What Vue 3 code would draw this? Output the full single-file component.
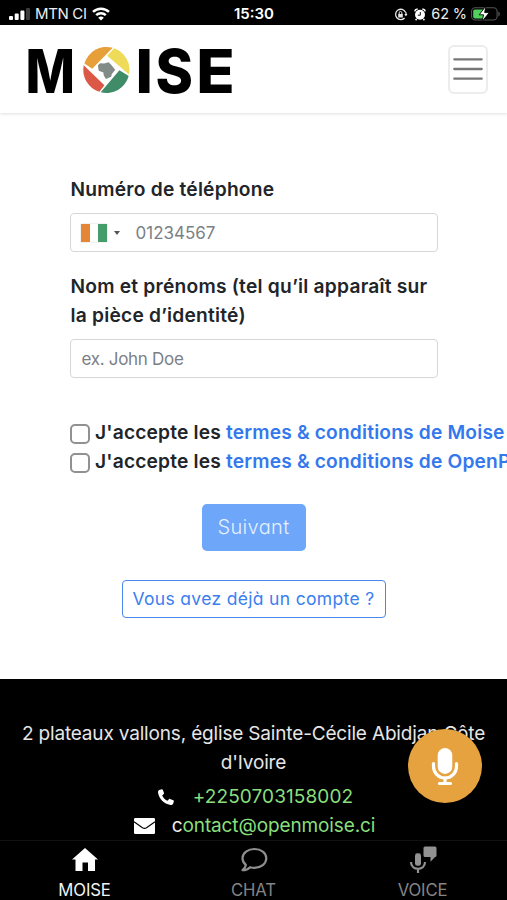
<script setup>
import { ref } from 'vue'

const phone = ref('')
const fullName = ref('')
const terms = ['Moise', 'OpenPay']
</script>

<template>
  <div class="screen">
    <div class="status">
      <div class="status-left">
        <svg class="signal" width="22" height="14" viewBox="0 0 22 14">
          <rect x="0" y="9" width="4" height="4" rx="1" fill="#fff" />
          <rect x="5.7" y="6.5" width="4" height="6.5" rx="1" fill="#fff" />
          <rect x="11.4" y="3.5" width="4" height="9.5" rx="1" fill="#fff" />
          <rect x="17" y="1" width="4" height="12" rx="1" fill="#3c3c3c" />
        </svg>
        <span class="carrier">MTN CI</span>
        <svg class="wifi" width="18" height="14" viewBox="0 0 18 14" fill="none" stroke="#fff" stroke-width="2.5">
          <path d="M1 4.9a11.5 11.5 0 0 1 16 0" />
          <path d="M4.2 8.2a7 7 0 0 1 9.6 0" />
          <path d="M9 13.6 6.2 10.8a4 4 0 0 1 5.6 0Z" fill="#fff" stroke="none" />
        </svg>
      </div>
      <span class="clock">15:30</span>
      <div class="status-right">
        <svg width="14" height="13" viewBox="0 0 14 13" fill="none" stroke="#e8e8e8">
          <path d="M11.5 4.2A5.2 5.2 0 1 0 10.6 10M12 4.2v3" stroke-width="1.3" />
          <path d="M10.3 6h3.2l-1.6 2.2Z" fill="#e8e8e8" stroke="none" />
          <rect x="4.2" y="6" width="4.6" height="3.5" fill="#e8e8e8" stroke="none" />
          <path d="M5.2 6V4.8a1.3 1.3 0 0 1 2.6 0V6" stroke-width="1" />
        </svg>
        <svg class="alarm" width="12" height="13" viewBox="0 0 12 13">
          <circle cx="6" cy="6.8" r="5" fill="#fff" />
          <path d="M1 3.4A2 2 0 0 1 3.7 1.3M8.3 1.3A2 2 0 0 1 11 3.4M2.6 11l-1 1.3M9.4 11l1 1.3" stroke="#fff" stroke-width="1.5" fill="none" />
          <path d="M6.3 4v3.2H3.8" stroke="#111" stroke-width="1" fill="none" />
        </svg>
        <span class="percent">62 %</span>
        <svg class="battery" width="30" height="16" viewBox="0 0 30 16">
          <rect x=".6" y="1.8" width="25.5" height="12.2" rx="3.6" fill="none" stroke="#555" stroke-width="1.1" />
          <rect x="2.2" y="3.4" width="11" height="9" rx="1.7" fill="#4fd15c" />
          <path d="M27.4 5.5c2 .8 2 4 0 4.8Z" fill="#555" />
          <path d="M14.8 0 8.2 8.8h4.4L11 15.6l7.3-9H13.7Z" fill="#fff" stroke="#000" stroke-width=".9" />
        </svg>
      </div>
    </div>

    <header class="header">
      <svg class="logo" width="212" height="56" viewBox="0 0 212 56" role="img">
        <g class="logo-text">
          <text x="0.5" y="50.8" textLength="49.5" lengthAdjust="spacingAndGlyphs">M</text>
          <text x="110.5" y="50.8" textLength="17.5" lengthAdjust="spacingAndGlyphs">I</text>
          <text x="130.5" y="50.8" textLength="37.5" lengthAdjust="spacingAndGlyphs">S</text>
          <text x="171.3" y="50.8" textLength="38.5" lengthAdjust="spacingAndGlyphs">E</text>
        </g>
        <g transform="translate(81.2 27.8)">
          <path d="M6.5-22A23 23 0 0 0-21.8-6.2L-14-1Z" fill="#e79f3a" />
          <path d="M8-21.5A23 23 0 0 1 22.8 4.8L1-14Z" fill="#eedb58" />
          <path d="M22.5 6.3A23 23 0 0 1-5.5 22.4L13.2 .5Z" fill="#408b68" />
          <path d="M-6.8 22A23 23 0 0 1-22.5-4.500L-1.800 15.500Z" fill="#dc5846" />
          <path d="M-8.300-4.500-6-6.500-2-6.300 2.300-7.500 4.500-5.500 9 0 5.500 4.500 5 7-.3 9.300-2.500 5.500-2.800 2.800-7.500 1Z" fill="#838b88" />
        </g>
      </svg>
      <button class="menu" type="button">
        <svg width="30" height="24" viewBox="0 0 30 24" stroke="#777" stroke-width="2.3" stroke-linecap="round">
          <path d="M1.3 2.3h27.4M1.3 12h27.4M1.3 21.7h27.4" />
        </svg>
      </button>
    </header>

    <main class="form">
      <label class="label">Numéro de téléphone</label>
      <div class="field">
        <span class="flag"><i class="orange"></i><i class="white"></i><i class="green"></i></span>
        <span class="caret"></span>
        <input v-model="phone" class="phone" placeholder="01234567" />
      </div>
      <label class="label name">Nom et prénoms (tel qu’il apparaît sur<br />la pièce d’identité)</label>
      <div class="field">
        <input v-model="fullName" class="fullname" placeholder="ex. John Doe" />
      </div>
      <div class="terms">
        <label v-for="t in terms" :key="t" class="term">
          <input type="checkbox" class="check" />
          <span>J'accepte les <a>termes &amp; conditions de {{ t }}</a></span>
        </label>
      </div>
      <button class="next" type="button">Suivant</button>
      <button class="account" type="button">Vous avez déjà un compte ?</button>
    </main>

    <footer class="footer">
      <p class="line address">2 plateaux vallons, église Sainte-Cécile Abidjan Côte<br />d'Ivoire</p>
      <p class="line tel">
        <svg width="16" height="16" viewBox="0 0 16 16" fill="#fff">
          <path d="M3.8.2 1.2 1C.2 1.4 0 2.5 0 3.6 1 10 6 15 12.4 16c1.2 0 2.4-.3 2.8-1.5l.7-2.2c.1-.5-.1-.8-.6-1L12 9.9c-.5-.2-.8 0-1.1.3l-1.3 1.6C7.2 10.7 5.3 8.8 4.2 6.4l1.5-1.3c.4-.3.5-.7.3-1.1L4.8.7C4.6.3 4.3.1 3.8.2Z" />
        </svg>
        <span>+2250703158002</span>
      </p>
      <p class="line mail">
        <svg width="21" height="16" viewBox="0 0 21 16">
          <rect width="21" height="16" rx="1.2" fill="#fff" />
          <path d="M0 3.8 8.5 9.8Q10.5 11 12.5 9.8L21 3.8" fill="none" stroke="#000" stroke-width="1.1" />
        </svg>
        <span><b>c</b>ontact@openmoise.ci</span>
      </p>
      <button class="fab" type="button">
        <svg width="28" height="40" viewBox="0 0 28 40">
          <rect x="6.7" y="1" width="14.6" height="26" rx="7.3" fill="#fff" />
          <path d="M2.5 16.5v3a11.5 11.5 0 0 0 23 0v-3" fill="none" stroke="#fff" stroke-width="3.2" stroke-linecap="round" />
          <path d="M14 31v5M8.5 36.5h11" stroke="#fff" stroke-width="3.2" stroke-linecap="round" />
        </svg>
      </button>
    </footer>

    <nav class="tabs">
      <a class="tab active">
        <svg width="28" height="26" viewBox="0 0 28 26"><path d="M14 1 27 12.5H24V24H17V15.5H11.5V24H4.5V12.5H1Z" fill="#fff" /></svg>
        <span>MOISE</span>
      </a>
      <a class="tab">
        <svg width="28" height="26" viewBox="0 0 28 26" fill="none" stroke="#8f8f8f" stroke-width="2.2" stroke-linejoin="round"><path d="M14.5 2C8 2 2.5 6 2.5 11.3c0 2.8 1.3 5 3.4 6.6-.3 2.2-1.3 3.8-3.4 5.3 3.2 0 5.8-1 7.6-3 1.3.4 2.7.6 4.4.6 6.5 0 11.8-4 11.8-9.5S21 2 14.5 2Z" /></svg>
        <span>CHAT</span>
      </a>
      <a class="tab">
        <svg width="28" height="28" viewBox="0 0 28 28">
          <rect x="6" y="7.3" width="6" height="12.5" rx="2.4" fill="#929292" />
          <path d="M2 16c0 9 14 9 14 0M9 22.5v4.5" fill="none" stroke="#929292" stroke-width="2.2" />
          <path d="M16 .5H26Q27.5.5 27.5 2V9.5Q27.5 11 26 11L21.5 15.8V11H16Q14.5 11 14.5 9.5V2Q14.5.5 16 .5Z" fill="#929292" />
        </svg>
        <span>VOICE</span>
      </a>
    </nav>
  </div>
</template>

<style>
body { background: #fff; overflow: hidden; }
</style>

<style scoped>
* { box-sizing: border-box; }
.screen {
  display: flex; flex-direction: column; width: 507px; height: 900px; overflow: hidden;
  background: #fff; color: #212529; font-family: Inter, "Liberation Sans", sans-serif;
}
button, input { font-family: inherit; margin: 0; }
.status {
  display: grid; grid-template-columns: 1fr auto 1fr; align-items: center; height: 25px; flex: none;
  padding: 3px 6px 0 9px; background: #000; color: #eee; font-size: 15px; line-height: 20px;
}
.status-left, .status-right { display: flex; align-items: center; }
.status-right { justify-content: flex-end; }
.carrier { margin: 0 5px 0 4px; font-size: 15px; letter-spacing: -.35px; }
.clock { margin-right: 2px; font-weight: 600; font-size: 15px; color: #fff; }
.alarm { margin-left: 6px; }
.percent { margin: 0 4px 0 5px; font-size: 14.5px; letter-spacing: -.1px; }
.header {
  display: flex; align-items: center; justify-content: space-between; height: 88px; flex: none;
  padding: 0 19px 0 25px; box-shadow: 0 1px 3px rgba(0, 0, 0, .13);
}
.logo { margin-top: 2px; overflow: visible; }
.logo-text { font-family: Inter, sans-serif; font-weight: 800; font-size: 60.5px; fill: #000; }
.menu {
  display: flex; align-items: center; justify-content: center; width: 40px; height: 49px; padding: 0;
  background: #fff; border: 2px solid #ececec; border-radius: 6px;
}
.form { display: flex; flex-direction: column; height: 566px; flex: none; padding: 62px 70px 0; }
.label { padding-left: .5px; font-size: 19.2px; font-weight: 600; letter-spacing: .22px; line-height: 29px; white-space: nowrap; }
.name { margin-top: 20px; }
.field {
  display: flex; align-items: center; width: 368px; height: 39px; flex: none; margin-top: 9px; padding-left: 10px;
  border: 1.5px solid #d5d8db; border-radius: 4px; background: #fff;
}
.flag { display: flex; width: 26px; height: 18px; box-shadow: 0 0 1px #aaa; }
.flag i { flex: 1; }
.orange { background: #e58536; }
.white { background: #fff; }
.green { background: #459d69; }
.caret { margin: 0 15px 0 7px; border: 3.5px solid transparent; border-top: 4.5px solid #555; border-bottom: 0; }
.field input { border: 0; outline: 0; padding: 0; background: none; flex: 1; min-width: 0; font-size: 17px; color: #212529; }
.field input::placeholder { color: #7b8086; opacity: 1; }
.field .phone { padding-left: .5px; }
.field .fullname { padding-left: .5px; letter-spacing: -.3px; }
.terms { margin-top: 39px; }
.term { display: flex; align-items: center; height: 29.5px; gap: 5px; font-size: 19.2px; font-weight: 600; letter-spacing: .17px; white-space: nowrap; }
.term a { color: #3478ed; }
.check { appearance: none; flex: none; width: 20px; height: 20px; margin: 4px 0 0; border: 2px solid #919191; border-radius: 5px; background: #fff; }
.next, .account { font-feature-settings: "cv11"; }
.next {
  align-self: center; width: 104px; height: 47px; margin-top: 28px; padding: 0 0 2px; border: 0; border-radius: 5px;
  background: #6ea6f9; color: #e6f0ff; font-size: 20px; font-weight: 300; letter-spacing: .35px;
}
.account {
  align-self: center; width: 264px; height: 38px; margin-top: 29px; padding: 0 0 2px; border: 1.5px solid #4a86ed;
  border-radius: 4px; background: #fff; color: #3c7eef; font-size: 17.5px; letter-spacing: .33px; white-space: nowrap;
}
.footer {
  position: relative; display: flex; flex-direction: column; align-items: center; height: 161px; flex: none;
  padding-top: 40px; background: #000; color: #e6e6e6; font-size: 19px;
}
.line { display: flex; align-items: center; justify-content: center; height: 29px; margin: 0; line-height: 29px; white-space: nowrap; }
.line b { font-weight: 400; color: #eee; }
.address { display: block; height: 58px; text-align: center; letter-spacing: -.17px; }
.tel { margin-top: 5px; padding-left: 4px; gap: 19px; color: #8adf7c; letter-spacing: .1px; }
.mail { padding-left: 2px; gap: 17px; color: #8adf7c; letter-spacing: -.12px; }
.fab {
  position: absolute; left: 408px; top: 50px; display: flex; align-items: center; justify-content: center;
  width: 74px; height: 74px; padding: 2px 0 0; border: 0; border-radius: 50%; background: #e5a23e;
}
.tabs { display: grid; grid-template-columns: repeat(3, 1fr); height: 60px; flex: none; background: #000; border-top: 1px solid #111; }
.tab { display: flex; flex-direction: column; align-items: center; padding-top: 5px; color: #858585; font-size: 16.7px; letter-spacing: -.15px; }
.tab svg { height: 28px; flex: none; }
.tab span { line-height: 24px; margin-top: 4px; }
.tab.active { color: #f2f2f2; }
</style>
